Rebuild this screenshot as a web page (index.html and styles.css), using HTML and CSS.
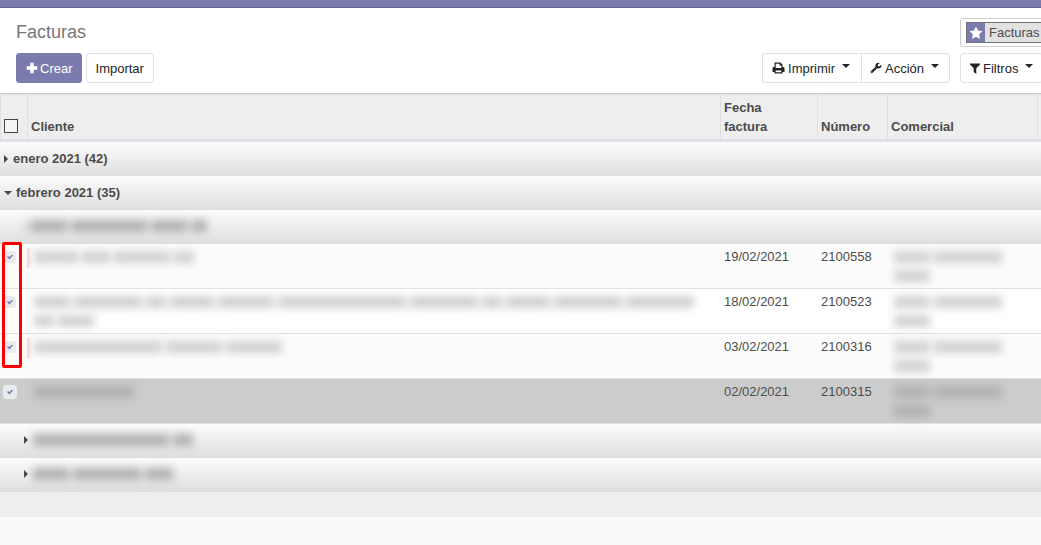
FILE: index.html
```html
<!DOCTYPE html>
<html lang="es">
<head>
<meta charset="utf-8">
<title>Facturas</title>
<link rel="stylesheet" href="styles.css">
</head>
<body>
<div class="navbar"></div>
<header class="panel">
  <div class="panel-main">
    <h1 class="title">Facturas</h1>
    <div class="toolbar">
      <div class="buttons">
        <button class="btn btn-primary" type="button"><svg class="icon" width="12" height="12" viewBox="0 0 12 12" aria-hidden="true"><path d="M4.300 .7h3.400v3.600h3.600v3.400H7.700v3.600H4.300V7.700H.7V4.300h3.600z"/></svg>Crear</button>
        <button class="btn" type="button">Importar</button>
      </div>
      <div class="btn-group">
        <button class="btn btn-print" type="button"><svg class="icon" width="13" height="12" viewBox="0 0 13 12" aria-hidden="true"><path fill-rule="evenodd" d="M2.500 0.500h6l2 2V5h.7Q12.500 5 12.500 6.300V10h-2v1.500h-8V10h-2V6.300Q.5 5 1.800 5h.7zM3.700 1.700V6h5.600V3.400H7.600V1.700zM3.700 8.600v1.700h5.600V8.600z"/></svg>Imprimir<span class="caret"></span></button>
        <button class="btn" type="button"><svg class="icon" width="12" height="12" viewBox="0 0 13 12" aria-hidden="true"><path fill-rule="evenodd" d="M12.300 2.300C13 5.300 10.500 7.300 7.600 6.400L3 11.200C1.500 12.600-.3 10.700 1 9.300L5.900 4.800C5.200 1.700 7.800-.3 10.700.7L8.600 2.200V3.700L10 4.400zM2 9.700a.6.6 0 1 0 .1 1.200.6.6 0 0 0-.1-1.200z"/></svg>Acción<span class="caret"></span></button>
      </div>
    </div>
  </div>
  <div class="search-panel">
    <div class="searchbox">
      <span class="facet"><span class="facet-icon"><svg width="14" height="14" viewBox="0 0 14 14" aria-hidden="true"><path d="M7 .5l1.900 4.100 4.600.6-3.400 3.100.9 4.600L7 10.700l-4 2.200.9-4.600L.5 5.200l4.600-.6z"/></svg></span><span class="facet-text">Facturas</span></span>
    </div>
    <button class="btn btn-filter" type="button"><svg class="icon" width="10" height="11" viewBox="0 0 10 11" aria-hidden="true"><path d="M0 .5h10v1L6.300 5.300V11L3.700 9V5.300L0 1.500z"/></svg>Filtros<span class="caret"></span></button>
  </div>
</header>
<main class="list">
  <div class="marker"></div>
  <table class="table">
    <colgroup><col class="col-check"><col><col class="col-date"><col class="col-number"><col class="col-seller"><col class="col-extra"></colgroup>
    <thead>
      <tr><th><input class="check-all" type="checkbox" aria-label="Seleccionar todo"></th><th>Cliente</th><th>Fecha<br>factura</th><th>Número</th><th>Comercial</th><th></th></tr>
    </thead>
    <tbody>
      <tr class="group"><th colspan="6"><span class="arrow-right"></span>enero 2021 (42)</th></tr>
      <tr class="group"><th colspan="6"><span class="arrow-down"></span>febrero 2021 (35)</th></tr>
      <tr class="group"><th colspan="6"><div class="hidden-text nested strong"><i class="w2"></i><i class="w36"></i><i class="w76"></i><i class="w36"></i><i class="w16"></i></div></th></tr>
      <tr class="row"><td><input class="check" type="checkbox" checked aria-label="Factura 2100558"></td><td class="tinted"><div class="hidden-text"><i class="w44"></i><i class="w28"></i><i class="w56"></i><i class="w20"></i></div></td><td>19/02/2021</td><td>2100558</td><td><div class="hidden-text"><i class="w36"></i><i class="w68"></i></div><div class="hidden-text"><i class="w36"></i></div></td><td></td></tr>
      <tr class="row"><td><input class="check" type="checkbox" checked aria-label="Factura 2100523"></td><td><div class="hidden-text"><i class="w36"></i><i class="w68"></i><i class="w20"></i><i class="w44"></i><i class="w56"></i><i class="w128"></i><i class="w68"></i><i class="w20"></i><i class="w44"></i><i class="w68"></i><i class="w68"></i></div><div class="hidden-text"><i class="w20"></i><i class="w36"></i></div></td><td>18/02/2021</td><td>2100523</td><td><div class="hidden-text"><i class="w36"></i><i class="w68"></i></div><div class="hidden-text"><i class="w36"></i></div></td><td></td></tr>
      <tr class="row"><td><input class="check" type="checkbox" checked aria-label="Factura 2100316"></td><td class="tinted"><div class="hidden-text"><i class="w128"></i><i class="w56"></i><i class="w56"></i></div></td><td>03/02/2021</td><td>2100316</td><td><div class="hidden-text"><i class="w36"></i><i class="w68"></i></div><div class="hidden-text"><i class="w36"></i></div></td><td></td></tr>
      <tr class="row active"><td><input class="check focused" type="checkbox" checked aria-label="Factura 2100315"></td><td><div class="hidden-text strong"><i class="w100"></i></div></td><td>02/02/2021</td><td>2100315</td><td><div class="hidden-text strong"><i class="w36"></i><i class="w68"></i></div><div class="hidden-text strong"><i class="w36"></i></div></td><td></td></tr>
      <tr class="group"><th colspan="6"><div class="subgroup"><span class="arrow-right"></span><div class="hidden-text strong"><i class="w136"></i><i class="w20"></i></div></div></th></tr>
      <tr class="group"><th colspan="6"><div class="subgroup"><span class="arrow-right"></span><div class="hidden-text strong"><i class="w36"></i><i class="w68"></i><i class="w28"></i></div></div></th></tr>
    </tbody>
    <tfoot><tr><td colspan="6"></td></tr></tfoot>
  </table>
</main>
</body>
</html>
```
FILE: styles.css
```css
* { box-sizing: border-box; }
body {
  margin: 0;
  background: #f9f9f9;
  color: #4c4c4c;
  font: 13px/19px "Liberation Sans", Arial, sans-serif;
  overflow-x: hidden;
}
.navbar { height: 8px; background: #7c7bad; border-bottom: 1px solid #5f5e97; }
.panel {
  display: flex;
  gap: 10px;
  height: 86px;
  padding: 10px 0 0 16px;
  background: #fff;
  border-bottom: 1px solid #cccccf;
  overflow: hidden;
}
.panel-main { flex: 1; }
.title { margin: 0; height: 35px; font-size: 18px; font-weight: 400; line-height: 28px; color: #777; }
.toolbar { display: flex; justify-content: space-between; }
.buttons { display: flex; gap: 4px; }
.btn {
  display: inline-flex;
  align-items: center;
  height: 30px;
  padding: 0 9px;
  background: #fff;
  border: 1px solid #dee2e6;
  border-radius: 3px;
  color: #212529;
  font: 13px/19px "Liberation Sans", Arial, sans-serif;
  white-space: nowrap;
}
.btn-primary { padding-right: 8px; background: #7c7bad; border-color: #7c7bad; color: #fff; }
.icon { flex: none; margin-right: 2px; fill: currentColor; }
.btn-group { display: flex; }
.btn-group .icon { margin-right: 3px; }
.btn-group .btn { padding: 0 10px 0 8px; border-radius: 0 3px 3px 0; }
.btn-group .btn-print { border-right: 0; border-radius: 3px 0 0 3px; padding: 0 11px 0 9px; }
.caret { margin: 0 0 4px 7px; border: 4px solid transparent; border-top-color: currentColor; border-bottom: 0; }
.search-panel { width: 81px; display: flex; flex-direction: column; align-items: flex-start; gap: 6px; }
.search-panel .icon { margin-right: 3px; }
.searchbox { height: 29px; padding: 3px 5px; border: 1px solid #ccc; border-radius: 3px; }
.facet { display: flex; height: 21px; width: 90px; border: 1px solid #6c757d; background: #e2e2e0; }
.facet-icon { display: flex; align-items: center; justify-content: center; width: 18px; background: #7c7bad; fill: #fff; }
.facet-text { padding-left: 4px; }
.list { position: relative; }
.table { width: 100%; table-layout: fixed; border-collapse: separate; border-spacing: 0; }
.col-check { width: 27px; }
.col-date { width: 97px; }
.col-number { width: 70px; }
.col-seller { width: 150px; }
.col-extra { width: 4px; }
th, td { padding: 0 3px; text-align: left; }
thead th {
  height: 48px;
  padding-bottom: 3px;
  vertical-align: bottom;
  background: #eee;
  border-left: 1px solid #dee2e6;
  border-top: 1px solid #dee2e6;
  border-bottom: 3px solid #dee2e6;
}
thead th:last-child { padding: 0; }
.check-all { display: block; appearance: none; width: 14px; height: 14px; margin: 0 0 3px; border: 1px solid #444; background: #f5f5f5; }
.group th { height: 34px; padding-bottom: 2px; background: linear-gradient(#fcfcfc, #dedede); vertical-align: middle; }
.arrow-right { display: inline-block; margin: 0 5px 0 1px; border: 4px solid transparent; border-left-color: #444; border-right: 0; }
.arrow-down { display: inline-block; margin: 0 4px 2px 1px; border: 4px solid transparent; border-top-color: #444; border-bottom: 0; }
.subgroup { display: flex; align-items: center; padding-left: 20px; }
.subgroup .hidden-text { padding-left: 0; }
.row td { height: 45px; padding-top: 3px; vertical-align: top; background: #fcfcfc; border-bottom: 1px solid #dee2e6; }
.row td:nth-child(3), .row td:nth-child(4) { padding-left: 4px; }
.row td:last-child { padding: 0; }
.row:nth-child(odd) td { background: #fff; }
.row.active td { background: #ccc; }
.row .tinted { background-image: linear-gradient(90deg, #fbd0d0, transparent 5px); background-size: 100% 20px; background-position: 0 4px; background-repeat: no-repeat; }
.check {
  appearance: none;
  display: grid;
  place-items: center;
  width: 12px;
  height: 12px;
  margin: 4px 0 0 1px;
  border-radius: 3px;
  background: #e9ecef;
}
.check::before { content: ""; width: 6px; height: 5px; background: #7c7bad; clip-path: polygon(0 50%, 20% 30%, 40% 55%, 80% 0, 100% 20%, 40% 100%); }
.check.focused { box-shadow: 0 0 0 1px #eee; }
.hidden-text { display: flex; align-items: center; gap: 4px; height: 19px; padding-left: 4px; filter: blur(4px); }
.hidden-text i { height: 12px; background: #d0d0d0; flex: none; }
.hidden-text.strong i { background: #b0b0b0; }
.hidden-text.nested { padding-left: 22px; }
.w2 { width: 2px; }
.w16 { width: 16px; }
.w20 { width: 20px; }
.w28 { width: 28px; }
.w36 { width: 36px; }
.w44 { width: 44px; }
.w56 { width: 56px; }
.w68 { width: 68px; }
.w76 { width: 76px; }
.w100 { width: 100px; }
.w128 { width: 128px; }
.w136 { width: 136px; }
tfoot td { height: 25px; background: #eee; }
.marker { position: absolute; z-index: 1; left: 2px; top: 148px; width: 20px; height: 126px; border: 3px solid #f00; border-radius: 2px; pointer-events: none; }
```
